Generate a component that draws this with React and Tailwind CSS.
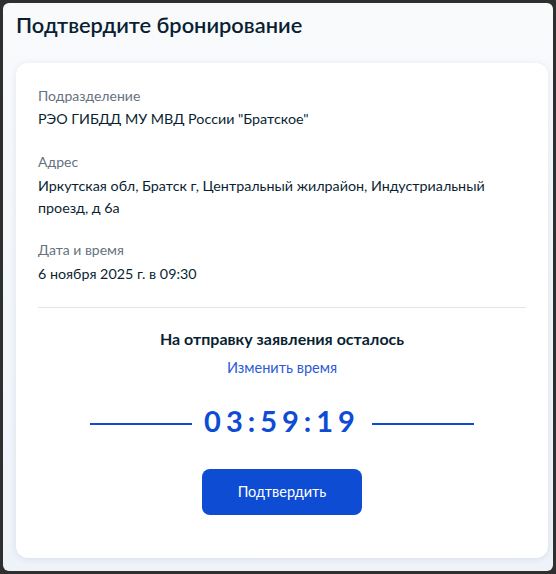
export default function App() {
  return (
    <div className="w-[556px] h-[574px] bg-[#2f2f2f] p-[3px]" style={{ fontFamily: "Lato, 'Noto Sans', sans-serif" }}>
      <div className="w-full h-full rounded-[6px] bg-gradient-to-b from-[#f9fafc] to-[#eef2f9] pl-[13px] pr-[5px] flex flex-col">
        <h1 className="text-[21.8px] leading-[28px] font-semibold text-[#0b1f33] pt-[8px] h-[60px]">Подтвердите бронирование</h1>
        <div className="bg-white rounded-[12px] shadow-[0_1px_6px_rgba(60,90,150,0.12)] px-[22px] pt-[23px] pb-[43px] flex flex-col">
          <div className="text-[14px] leading-[20px] text-[#66727f]">Подразделение</div>
          <div className="text-[14.3px] leading-[22px] text-[#0b1f33] mt-[2px]">РЭО ГИБДД МУ МВД России "Братское"</div>
          <div className="text-[14px] leading-[20px] text-[#66727f] mt-[22px]">Адрес</div>
          <div className="text-[14.3px] leading-[22px] text-[#0b1f33] mt-[3px] pr-[20px]">Иркутская обл, Братск г, Центральный жилрайон, Индустриальный проезд, д 6а</div>
          <div className="text-[14px] leading-[20px] text-[#66727f] mt-[21px]">Дата и время</div>
          <div className="text-[14.3px] leading-[22px] text-[#0b1f33] mt-[3px]">6 ноября 2025 г. в 09:30</div>
          <div className="h-px bg-[#e1e5ea] mt-[22px]" />
          <div className="text-[16px] leading-[22px] font-bold text-[#0b1f33] text-center mt-[20px]">На отправку заявления осталось</div>
          <div className="text-[14.5px] leading-[20px] text-[#2d5bd8] text-center mt-[8px]">Изменить время</div>
          <div className="flex items-center justify-center mt-[25px] h-[36px]">
            <div className="w-[102px] h-[2px] bg-[#0d4cd3] mt-[5px]" />
            <div className="mx-[12px] text-[29px] leading-[36px] font-bold text-[#0d4cd3] tracking-[5px]">03:59:1<span className="tracking-normal">9</span></div>
            <div className="w-[102px] h-[2px] bg-[#0d4cd3] ml-[5px] mt-[5px]" />
          </div>
          <div className="flex justify-center mt-[30px]">
            <button className="w-[160px] h-[46px] rounded-[8px] bg-[#0d4cd3] text-white text-[14.5px] leading-[20px]">Подтвердить</button>
          </div>
        </div>
      </div>
    </div>
  );
}
